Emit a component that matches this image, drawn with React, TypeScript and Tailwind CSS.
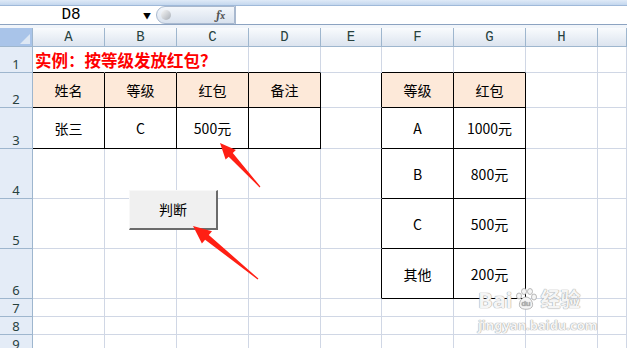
import React from 'react'

const COLS = ['A', 'B', 'C', 'D', 'E', 'F', 'G', 'H', '']
const ROW_H = ['h-[26px]', 'h-[35px]', 'h-[41px]', 'h-[50px]', 'h-[50px]', 'h-[50px]', 'h-[18px]', 'h-[18px]', 'h-[18px]']

const DATA: Record<string, string> = {
  '2,0': '姓名', '2,1': '等级', '2,2': '红包', '2,3': '备注', '2,5': '等级', '2,6': '红包',
  '3,0': '张三', '3,1': 'C', '3,2': '500元', '3,5': 'A', '3,6': '1000元',
  '4,5': 'B', '4,6': '800元',
  '5,5': 'C', '5,6': '500元',
  '6,5': '其他', '6,6': '200元',
}

const inTable = (r: number, c: number) =>
  (r >= 2 && r <= 3 && c >= 0 && c <= 3) || (r >= 2 && r <= 6 && c >= 5 && c <= 6)

// tapered red arrow, drawn from tail to tip
const arrowPoints = (tip: number[], tail: number[], head: number, wing: number, neck: number) => {
  const dx = tail[0] - tip[0]
  const dy = tail[1] - tip[1]
  const len = Math.hypot(dx, dy)
  const ux = dx / len, uy = dy / len
  const nx = -uy, ny = ux
  const bx = tip[0] + ux * head, by = tip[1] + uy * head
  const pts = [
    [tip[0], tip[1]],
    [bx + nx * wing, by + ny * wing],
    [bx + nx * neck, by + ny * neck],
    [tail[0] + nx * 0.6, tail[1] + ny * 0.6],
    [tail[0] - nx * 0.6, tail[1] - ny * 0.6],
    [bx - nx * neck, by - ny * neck],
    [bx - nx * wing, by - ny * wing],
  ]
  return pts.map(p => p.map(v => v.toFixed(1)).join(',')).join(' ')
}

const Cell = ({ r, c }: { r: number; c: number }) => {
  const text = DATA[`${r},${c}`]
  const isTitle = r === 1 && c === 0
  const rightBlack = inTable(r, c) || inTable(r, c + 1)
  const bottomBlack = inTable(r, c) || inTable(r + 1, c)
  const hideRight = r === 1 && (c === 0 || c === 1)
  const peach = r === 2 && inTable(r, c)
  return (
    <div
      className={`box-border border-b border-r flex text-[14px] text-black ${
        isTitle ? 'items-end justify-start' : 'items-center justify-center'
      } ${
        hideRight ? 'border-r-transparent' : rightBlack ? 'border-r-black' : 'border-r-[#d0d7e5]'
      } ${bottomBlack ? 'border-b-black' : 'border-b-[#d0d7e5]'} ${peach ? 'bg-[#fde9d9]' : ''}`}
    >
      {isTitle ? (
        <span className="relative z-10 mb-[2px] ml-[2px] whitespace-nowrap text-[16.5px] leading-[20px] font-bold text-[#ff0000]">
          实例：按等级发放红包？
        </span>
      ) : (
        text && <span className="mt-[1px]">{text}</span>
      )}
    </div>
  )
}

export default function App() {
  const rows = [1, 2, 3, 4, 5, 6, 7, 8, 9]
  return (
    <div className="relative w-[627px] h-[348px] overflow-hidden bg-white font-['Noto_Sans_CJK_SC',sans-serif]">
      {/* formula bar */}
      <div className="h-[6px] bg-gradient-to-b from-[#dfeaf7] to-[#c4d7ee] border-b border-b-[#9fb9d9]" />
      <div className="flex h-[19px] border-b border-b-[#8ca3c1]">
        <div className="relative w-[156px] flex items-center justify-center bg-white">
          <span className="font-mono text-[16px] text-black -ml-[14px]">D8</span>
          <span className="absolute right-[5px] top-[4px] text-[8px] text-black">▼</span>
        </div>
        <div className="relative w-[79px] flex items-center justify-end pr-[9px] rounded-l-full border border-[#a9b9cf] bg-gradient-to-b from-[#f4f7fb] to-[#d9e2ee]">
          <span className="absolute left-[4px] top-[3px] w-[10px] h-[10px] rounded-full bg-gradient-to-br from-[#f8f8f8] to-[#a9afb7]" />
          <span className="font-serif italic font-bold text-[12px] text-[#555]">f<span className="text-[10px]">x</span></span>
        </div>
        <div className="flex-1 bg-white border-l border-l-[#a9b9cf]" />
      </div>
      <div className="h-[3px] bg-[#f1f5fa]" />

      {/* sheet */}
      <div className="grid grid-cols-[33px_72px_72px_72px_72px_61px_72px_72px_72px_1fr]">
        <div className="box-border h-[19px] border-r border-b border-[#9eb6ce] bg-[#a9c4e9] relative">
          <div className="absolute right-[2px] bottom-[2px] w-0 h-0 border-l-[10px] border-l-transparent border-b-[10px] border-b-[#dde7f4]" />
        </div>
        {COLS.map((c, i) => (
          <div
            key={i}
            className="box-border h-[19px] border-r border-b border-[#9eb6ce] bg-gradient-to-b from-[#f9fbfd] to-[#dce4ef] flex items-center justify-center font-mono text-[14px] text-[#27413e]"
          >
            {c}
          </div>
        ))}
        {rows.map(r => (
          <React.Fragment key={r}>
            <div
              className={`box-border ${ROW_H[r - 1]} border-r border-b border-[#9eb6ce] bg-[#e4ecf7] flex items-end justify-center pb-[1px] font-sans text-[13px] leading-[14px] text-[#27413e]`}
            >
              {r}
            </div>
            {COLS.map((_, c) => (
              <Cell key={c} r={r} c={c} />
            ))}
          </React.Fragment>
        ))}
      </div>

      {/* form button */}
      <button className="absolute left-[129px] top-[190px] w-[89px] h-[40px] box-border bg-[#f0f0f0] border-t border-l border-t-[#f8f8f8] border-l-[#f8f8f8] border-r-2 border-b-2 border-r-[#6b6b6b] border-b-[#6b6b6b] text-[14px] text-black flex items-center justify-center">
        判断
      </button>

      {/* watermark */}
      <div className="absolute left-[478px] top-[287px] flex flex-col items-start text-[#f5f5f5] [text-shadow:0_0_1px_#9a9a9a,0_0_1px_#9a9a9a] pointer-events-none">
        <div className="flex items-center gap-[2px]">
          <span className="font-sans font-bold text-[22px] leading-[24px]">Bai</span>
          <svg width="24" height="24" viewBox="0 0 24 24">
            <g fill="#f5f5f5" stroke="#a8a8a8" strokeWidth="0.8">
              <ellipse cx="5" cy="9" rx="2.5" ry="3" />
              <ellipse cx="10" cy="4.5" rx="2.5" ry="3" />
              <ellipse cx="16" cy="4.5" rx="2.5" ry="3" />
              <ellipse cx="20" cy="10" rx="2.5" ry="3" />
              <path d="M12 10 C7 10 4 17 6 20 C8 23 16 23 18 20 C20 17 17 10 12 10 Z" />
            </g>
            <text x="12" y="19" textAnchor="middle" fontSize="8" fontFamily="Liberation Sans" fill="#a8a8a8">du</text>
          </svg>
          <span className="font-bold text-[20px] leading-[24px]">经验</span>
        </div>
        <span className="font-sans font-bold text-[13px] leading-[16px] mt-[6px]">jingyan.baidu.com</span>
      </div>

      {/* red arrows */}
      <svg className="absolute left-0 top-0 pointer-events-none" width="627" height="348">
        <polygon points={arrowPoints([220, 143], [260, 187], 16, 7, 2.8)} fill="#ff1f14" />
        <polygon points={arrowPoints([193, 226], [258, 279], 18, 8, 3)} fill="#ff1f14" />
      </svg>
    </div>
  )
}
